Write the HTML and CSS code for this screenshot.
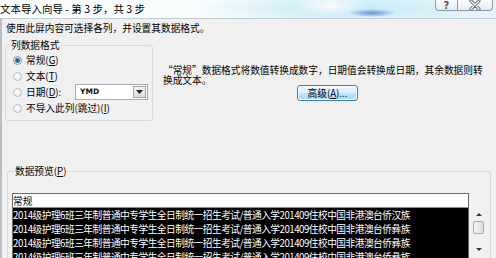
FILE: index.html
```html
<!DOCTYPE html>
<html lang="zh-CN">
<head>
<meta charset="utf-8">
<title>文本导入向导</title>
<link rel="stylesheet" href="styles.css">
</head>
<body>
<div class="window">
  <div class="titlebar">
    <span class="title">文本导入向导 - 第 3 步，共 3 步</span>
    <div class="caption-buttons">
      <span class="cap-btn help">?</span>
      <span class="cap-btn close">
        <svg width="12" height="10" viewBox="0 0 12 10"><path d="M2 1 L10 9 M10 1 L2 9" stroke="#4a5563" stroke-width="3" stroke-linecap="round"/><path d="M2 1 L10 9 M10 1 L2 9" stroke="#ffffff" stroke-width="1.4" stroke-linecap="round"/></svg>
      </span>
    </div>
  </div>
  <div class="client">
    <p class="intro">使用此屏内容可选择各列，并设置其数据格式。</p>
    <div class="format-row">
      <fieldset class="group format-group">
        <legend>列数据格式</legend>
        <label class="radio-row"><span class="radio checked"></span>常规(<u>G</u>)</label>
        <label class="radio-row"><span class="radio"></span>文本(<u>T</u>)</label>
        <label class="radio-row"><span class="radio"></span>日期(<u>D</u>):
          <span class="combo"><span class="combo-value">YMD</span><span class="combo-btn"><svg width="7" height="4" viewBox="0 0 7 4"><path d="M0 0 H7 L3.5 4 Z" fill="#222"/></svg></span></span>
        </label>
        <label class="radio-row"><span class="radio"></span>不导入此列(跳过)(<u>I</u>)</label>
      </fieldset>
      <div class="desc">
        <p class="desc-text">“常规”数据格式将数值转换成数字，日期值会转换成日期，其余数据则转换成文本。</p>
        <button class="btn">高级(<u>A</u>)...</button>
      </div>
    </div>
    <fieldset class="group preview-group">
      <legend>数据预览(<u>P</u>)</legend>
      <div class="preview">
        <div class="grid">
          <div class="grid-head">常规</div>
          <div class="grid-row">2014级护理6班三年制普通中专学生全日制统一招生考试/普通入学201409住校中国非港澳台侨汉族</div>
          <div class="grid-row">2014级护理6班三年制普通中专学生全日制统一招生考试/普通入学201409住校中国非港澳台侨彝族</div>
          <div class="grid-row">2014级护理6班三年制普通中专学生全日制统一招生考试/普通入学201409住校中国非港澳台侨彝族</div>
          <div class="grid-row">2014级护理6班三年制普通中专学生全日制统一招生考试/普通入学201409住校中国非港澳台侨彝族</div>
        </div>
        <div class="vscroll">
          <span class="arrow up"></span>
          <span class="thumb"></span>
          <span class="arrow down"></span>
        </div>
      </div>
    </fieldset>
  </div>
</div>
</body>
</html>
```

FILE: styles.css
```css
* { box-sizing: border-box; }
html, body { margin: 0; padding: 0; }
body {
  width: 496px;
  height: 258px;
  overflow: hidden;
  background: #f0f0f0;
  font-family: "Noto Sans CJK SC", "Noto Sans", sans-serif;
  color: #000;
}
u { text-decoration: underline; text-underline-offset: 1px; }

.window {
  width: 496px;
  height: 258px;
  display: flex;
  flex-direction: column;
  overflow: hidden;
}

.titlebar {
  height: 19px;
  flex: none;
  display: flex;
  align-items: flex-start;
  background:
    radial-gradient(ellipse 24px 4px at 372px 13px, rgba(90, 135, 215, 0.9), rgba(90, 135, 215, 0)),
    radial-gradient(ellipse 40px 10px at 330px 6px, rgba(255, 255, 255, 0.9), rgba(255, 255, 255, 0)),
    radial-gradient(ellipse 150px 18px at 345px 9px, #bfe8f5, rgba(191, 232, 245, 0)),
    linear-gradient(to right, #fdfefe 0, #f6fbfd 55%, #e6f4f9 100%);
  border-bottom: 1px solid #c4ccd3;
}
.title {
  font-size: 10.5px;
  line-height: 14px;
  padding-top: 2px;
  white-space: nowrap;
}
.caption-buttons {
  margin-left: auto;
  margin-right: 3px;
  display: flex;
  height: 11px;
}
.cap-btn {
  display: flex;
  align-items: center;
  justify-content: center;
  height: 11px;
  border: 1px solid #8c98a5;
  border-top: none;
  background: linear-gradient(#fdfdfe, #e6ebf0);
  font-family: "DejaVu Sans", sans-serif;
  font-size: 10px;
  font-weight: bold;
  line-height: 9px;
  color: #4a5563;
}
.cap-btn.help {
  width: 22px;
  border-bottom-left-radius: 4px;
  border-right: none;
}
.cap-btn.close {
  width: 36px;
  border-bottom-right-radius: 4px;
}

.client {
  flex: 1;
  background: #f0f0f0;
  border-left: 2px solid #b8bec4;
  font-size: 9.7px;
  line-height: 12px;
}
.intro {
  margin: 0;
  padding: 3px 0 0 4px;
  white-space: nowrap;
}

.group {
  margin: 0;
  border: 1px solid #d3d9de;
  border-radius: 3px;
  min-width: 0;
}
.group legend {
  padding: 0 1px;
  line-height: 12px;
}

.format-row {
  display: flex;
  margin-top: 5px;
}
.format-group {
  margin-left: 3px;
  width: 148px;
  padding: 1px 4px 4px 4px;
  flex: none;
}
.radio-row {
  display: flex;
  align-items: center;
  height: 16px;
  white-space: nowrap;
}
.radio {
  width: 9px;
  height: 9px;
  margin: 0 4px 0 3px;
  border-radius: 50%;
  border: 1px solid #b5b9bd;
  background: radial-gradient(circle at 40% 35%, #ffffff, #e4e6e8);
  flex: none;
}
.radio.checked {
  border-color: #8a9096;
  background: radial-gradient(circle, #1f4f73 0, #3a7fae 2px, #dfe9f0 3px, #f6f8f9 4px);
}
.combo {
  margin-left: auto;
  width: 73px;
  height: 16px;
  display: flex;
  border: 1px solid #a9acb0;
  background: #fff;
}
.combo-value {
  flex: 1;
  font-family: "DejaVu Sans", sans-serif;
  font-size: 7.5px;
  font-weight: bold;
  line-height: 14px;
  padding-left: 4px;
  color: #111;
}
.combo-btn {
  width: 13px;
  margin: 1px;
  display: flex;
  align-items: center;
  justify-content: center;
  border: 1px solid #a3a7ab;
  background: linear-gradient(#f7f7f7, #dcdcdc);
}

.desc {
  flex: 1;
  padding: 26px 0 0 10px;
}
.desc-text {
  margin: 0;
  width: 324px;
  line-height: 10px;
}
.btn {
  display: block;
  margin: 0 0 0 134px;
  width: 61px;
  height: 16px;
  padding: 0;
  font: inherit;
  line-height: 13px;
  color: #000;
  border: 1px solid #3c7fb1;
  border-radius: 3px;
  background: linear-gradient(#eaf6fd 0, #d9f0fc 50%, #bee6fd 51%, #a7d9f5 100%);
  box-shadow: inset 0 0 0 1px #fff;
}

.preview-group {
  margin: 44px 0 0 5px;
  width: 484px;
  padding: 16px 0 0 4px;
  border-bottom: none;
  border-bottom-left-radius: 0;
  border-bottom-right-radius: 0;
}
.preview-group legend {
  margin-left: 2px;
}
.preview {
  display: flex;
  height: 80px;
}
.grid {
  width: 457px;
  flex: none;
  border-top: 1px solid #6d6d6d;
  border-left: 1px solid #6d6d6d;
  border-right: 1px solid #6d6d6d;
  overflow: hidden;
}
.grid-head {
  height: 14px;
  line-height: 14px;
  background: #fff;
  border-bottom: 1px solid #8a8a8a;
}
.grid-row {
  height: 14px;
  line-height: 14px;
  background: #000;
  color: #fff;
  white-space: nowrap;
  letter-spacing: -0.5px;
}
.vscroll {
  width: 15px;
  margin: 15px 0 0 2px;
  display: flex;
  flex-direction: column;
  align-items: center;
  background: #f0f0f0;
}
.arrow {
  width: 0;
  height: 0;
  border-left: 3px solid transparent;
  border-right: 3px solid transparent;
}
.arrow.up {
  margin-top: 5px;
  border-bottom: 3px solid #333;
}
.arrow.down {
  margin-top: 14px;
  border-top: 3px solid #333;
}
.thumb {
  margin-top: 5px;
  width: 11px;
  height: 13px;
  border: 1px solid #a8a8a8;
  border-radius: 2px;
  background: linear-gradient(to right, #f4f4f4, #dedede);
}
```
